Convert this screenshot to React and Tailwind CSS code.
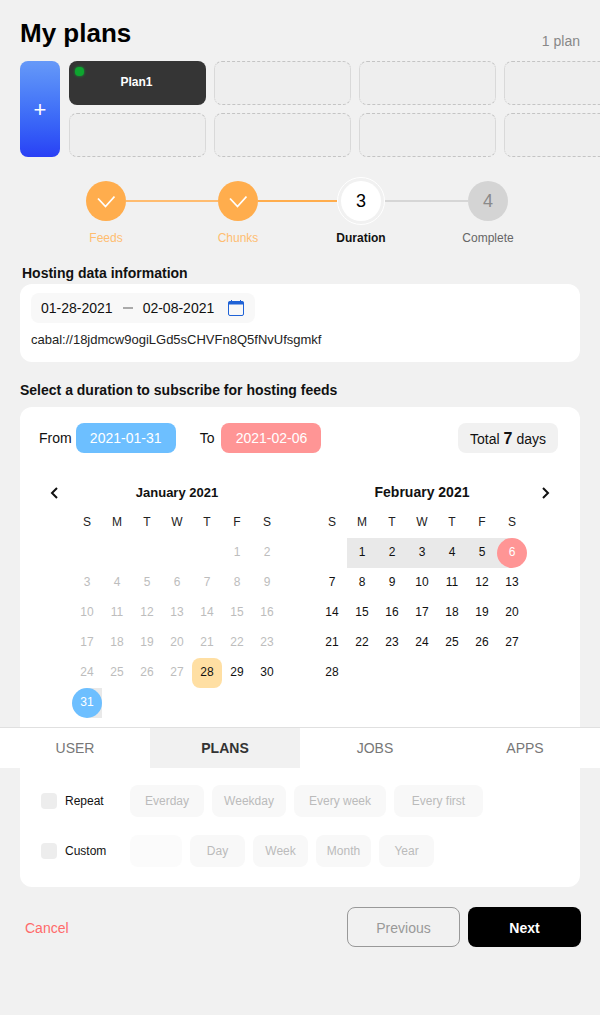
// My plans - duration step
const weekdays = ['S', 'M', 'T', 'W', 'T', 'F', 'S']

function Check() {
  return (
    <svg width="18" height="14" viewBox="0 0 18 14" fill="none" stroke="white" strokeWidth="1.8">
      <path d="M1 4.5 L8.5 12.5 L17.5 2.5" />
    </svg>
  )
}

function Step({ label, className, children, labelClass }) {
  return (
    <div className="relative z-10 flex w-10 flex-col items-center">
      <div className={`flex items-center justify-center rounded-full ${className}`}>{children}</div>
      <div className={`absolute top-[50px] whitespace-nowrap text-xs leading-[14px] ${labelClass}`}>{label}</div>
    </div>
  )
}

function Stepper() {
  return (
    <div className="mt-[24px] flex h-[40px] items-center pl-[86px]">
      <Step label="Feeds" className="h-10 w-10 bg-[#ffad4d]" labelClass="text-[#ffbd70]"><Check /></Step>
      <div className="h-0.5 w-[92px] bg-[#ffbc70]"></div>
      <Step label="Chunks" className="h-10 w-10 bg-[#ffad4d]" labelClass="text-[#ffbd70]"><Check /></Step>
      <div className="h-0.5 w-[79px] bg-[#ffad4d]"></div>
      <div className="relative z-10 flex w-12 flex-col items-center">
        <div className="flex h-12 w-12 items-center justify-center rounded-full border border-white">
          <div className="flex h-10 w-10 items-center justify-center rounded-full bg-white text-lg text-black">3</div>
        </div>
        <div className="absolute top-[54px] whitespace-nowrap text-xs font-bold leading-[14px] text-[#111]">Duration</div>
      </div>
      <div className="h-0.5 w-[83px] bg-[#d6d6d6]"></div>
      <Step label="Complete" className="h-10 w-10 bg-[#d4d4d4] text-lg text-[#8a8a8a]" labelClass="text-[#666]">4</Step>
    </div>
  )
}

function PlanSlot() {
  return <div className="h-11 w-[137px] shrink-0 rounded-lg border border-dashed border-[#c4c4c4] bg-[#eeeeee] [border-left-style:dotted] [border-right-style:dotted]"></div>
}

function Month({ title, titleClass, blanks, days, render }) {
  return (
    <div className="w-[210px]">
      <div className={`flex h-[16px] items-center justify-center font-bold text-[#111] ${titleClass}`}>{title}</div>
      <div className="mt-[7px] grid grid-cols-[repeat(7,30px)] auto-rows-[30px] text-xs">
        {weekdays.map((d, i) => (
          <div key={i} className="flex items-center justify-center pb-0.5 text-[#222]">{d}</div>
        ))}
        {Array.from({ length: blanks }).map((_, i) => <div key={i}></div>)}
        {Array.from({ length: days }).map((_, i) => render(i + 1))}
      </div>
    </div>
  )
}

function janDay(d) {
  if (d === 28) {
    return <div key={d} className="flex items-center justify-center rounded-lg bg-[#ffdfa3] pb-0.5 text-[#111]">{d}</div>
  }
  if (d === 31) {
    return (
      <div key={d} className="bg-gradient-to-r from-white from-50% to-[#e9e9e9] to-50%">
        <div className="flex h-full items-center justify-center rounded-full bg-[#6dbfff] pb-0.5 text-white">{d}</div>
      </div>
    )
  }
  return (
    <div key={d} className={`flex items-center justify-center pb-0.5 ${d > 28 ? 'text-[#111]' : 'text-[#bdbdbd]'}`}>{d}</div>
  )
}

function febDay(d) {
  if (d === 6) {
    return (
      <div key={d} className="bg-gradient-to-r from-[#e9e9e9] from-50% to-white to-50%">
        <div className="flex h-full items-center justify-center rounded-full bg-[#ff9595] pb-0.5 text-white">{d}</div>
      </div>
    )
  }
  return (
    <div key={d} className={`flex items-center justify-center pb-0.5 text-[#111] ${d < 6 ? 'bg-[#e9e9e9]' : ''}`}>{d}</div>
  )
}

function Chip({ children, className }) {
  return (
    <div className={`flex h-8 items-center justify-center rounded-lg text-xs text-[#bbbbbb] ${className}`}>{children}</div>
  )
}

export default function App() {
  return (
    <div className="relative h-[1015px] w-[600px] overflow-hidden bg-[#f1f1f1] font-['Liberation_Sans',Arial,sans-serif]">
      <div className="flex h-[61px] items-start justify-between px-5 pt-[17px]">
        <h1 className="text-[26px] font-bold leading-[32px] text-black">My plans</h1>
        <span className="mt-[16px] text-sm leading-4 text-[#888]">1 plan</span>
      </div>

      <div className="flex gap-[9px] pl-5">
        <button className="flex h-24 w-10 shrink-0 items-center justify-center rounded-lg bg-gradient-to-b from-[#6699f8] to-[#2a3ff5] text-[22px] text-white">+</button>
        <div className="flex flex-col gap-2">
          <div className="flex gap-2">
            <div className="relative flex h-11 w-[137px] shrink-0 items-center justify-center rounded-lg bg-[#353535] pb-0.5 pr-0.5 text-xs font-bold text-white">
              <span className="absolute left-1.5 top-1.5 h-[9px] w-[9px] rounded-sm bg-[#0ea52f] shadow-[0_0_3px_#0f9d32]"></span>
              Plan1
            </div>
            <PlanSlot /><PlanSlot /><PlanSlot />
          </div>
          <div className="flex gap-2">
            <PlanSlot /><PlanSlot /><PlanSlot /><PlanSlot />
          </div>
        </div>
      </div>

      <Stepper />

      <div className="mt-[44px] pl-[22px] text-sm font-bold leading-4 text-[#111]">Hosting data information</div>
      <div className="mx-5 mt-[3px] h-[78px] rounded-xl bg-white px-[11px] pt-[9px]">
        <div className="flex h-[30px] w-[224px] items-center rounded-lg bg-[#f8f8f8] pl-2.5 text-sm text-[#111]">
          <span>01-28-2021</span>
          <span className="mx-[10px] h-0.5 w-2.5 bg-[#aaa]"></span>
          <span>02-08-2021</span>
          <svg className="ml-[14px]" width="16" height="16" viewBox="0 0 16 16" fill="none" stroke="#1f62d6">
            <rect x="0.5" y="1.5" width="15" height="14" rx="1.5" />
            <path d="M0.5 3h15" strokeWidth="3" />
            <path d="M3.5 0v2M12.5 0v2" />
          </svg>
        </div>
        <div className="mt-[10px] text-[13px] leading-[14px] text-[#222]">cabal://18jdmcw9ogiLGd5sCHVFn8Q5fNvUfsgmkf</div>
      </div>

      <div className="mt-[20px] pl-5 text-sm font-bold leading-4 text-[#111]">Select a duration to subscribe for hosting feeds</div>
      <div className="mx-5 mt-[9px] h-[480px] rounded-xl bg-white">
        <div className="flex items-center pl-[19px] pr-[22px] pt-4 text-sm text-[#111]">
          <span>From</span>
          <div className="ml-1 flex h-[30px] w-[100px] items-center justify-center rounded-lg bg-[#6dbfff] text-white">2021-01-31</div>
          <span className="ml-6">To</span>
          <div className="ml-[7px] flex h-[30px] w-[100px] items-center justify-center rounded-lg bg-[#ff9595] text-white">2021-02-06</div>
          <div className="ml-auto flex h-[30px] w-[100px] items-center justify-center gap-1 rounded-lg bg-[#f1f1f1] pt-0.5">
            Total <b className="text-base">7</b> days
          </div>
        </div>

        <div className="relative mt-[32px] flex gap-[35px] pl-[52px]">
          <svg className="absolute left-[29px] top-[2px]" width="12" height="12" viewBox="0 0 12 12" fill="none" stroke="#111" strokeWidth="2">
            <path d="M8 1 L3 6 L8 11" />
          </svg>
          <svg className="absolute left-[519px] top-[2px]" width="12" height="12" viewBox="0 0 12 12" fill="none" stroke="#111" strokeWidth="2">
            <path d="M4 1 L9 6 L4 11" />
          </svg>
          <Month title="January 2021" titleClass="text-[13px]" blanks={5} days={31} render={janDay} />
          <Month title="February 2021" titleClass="pb-0.5 text-sm" blanks={1} days={28} render={febDay} />
        </div>
      </div>

      <div className="absolute left-0 right-0 top-[727px] grid h-[41px] grid-cols-4 border-t border-[#e0e0e0] bg-white text-sm text-[#777]">
        <div className="flex items-center justify-center">USER</div>
        <div className="flex items-center justify-center bg-[#f1f1f1] font-bold text-[#333]">PLANS</div>
        <div className="flex items-center justify-center">JOBS</div>
        <div className="flex items-center justify-center">APPS</div>
      </div>

      <div className="absolute left-[41px] top-[785px] flex flex-col gap-[18px] text-xs text-[#111]">
        <div className="flex items-center">
          <span className="h-4 w-4 rounded-sm bg-[#ededed]"></span>
          <span className="ml-2 w-[65px]">Repeat</span>
          <div className="flex gap-2">
            <Chip className="w-[74px] bg-[#f8f8f8]">Everday</Chip>
            <Chip className="w-[74px] bg-[#f8f8f8]">Weekday</Chip>
            <Chip className="w-[92px] bg-[#f8f8f8]">Every week</Chip>
            <Chip className="w-[89px] bg-[#f8f8f8]">Every first</Chip>
          </div>
        </div>
        <div className="flex items-center">
          <span className="h-4 w-4 rounded-sm bg-[#ededed]"></span>
          <span className="ml-2 w-[65px]">Custom</span>
          <div className="flex gap-2">
            <Chip className="w-[52px] bg-[#fbfbfb]"></Chip>
            <Chip className="w-[55px] bg-[#f8f8f8]">Day</Chip>
            <Chip className="w-[55px] bg-[#f8f8f8]">Week</Chip>
            <Chip className="w-[55px] bg-[#f8f8f8]">Month</Chip>
            <Chip className="w-[55px] bg-[#f8f8f8]">Year</Chip>
          </div>
        </div>
      </div>

      <div className="mt-5 flex items-center pl-[25px] pr-[19px]">
        <span className="pt-0.5 text-sm text-[#ff6a6a]">Cancel</span>
        <button className="ml-auto h-10 w-[113px] rounded-lg border border-[#999] pt-0.5 text-sm text-[#999]">Previous</button>
        <button className="ml-2 h-10 w-[113px] rounded-lg bg-black pt-0.5 text-sm font-bold text-white">Next</button>
      </div>
    </div>
  )
}
